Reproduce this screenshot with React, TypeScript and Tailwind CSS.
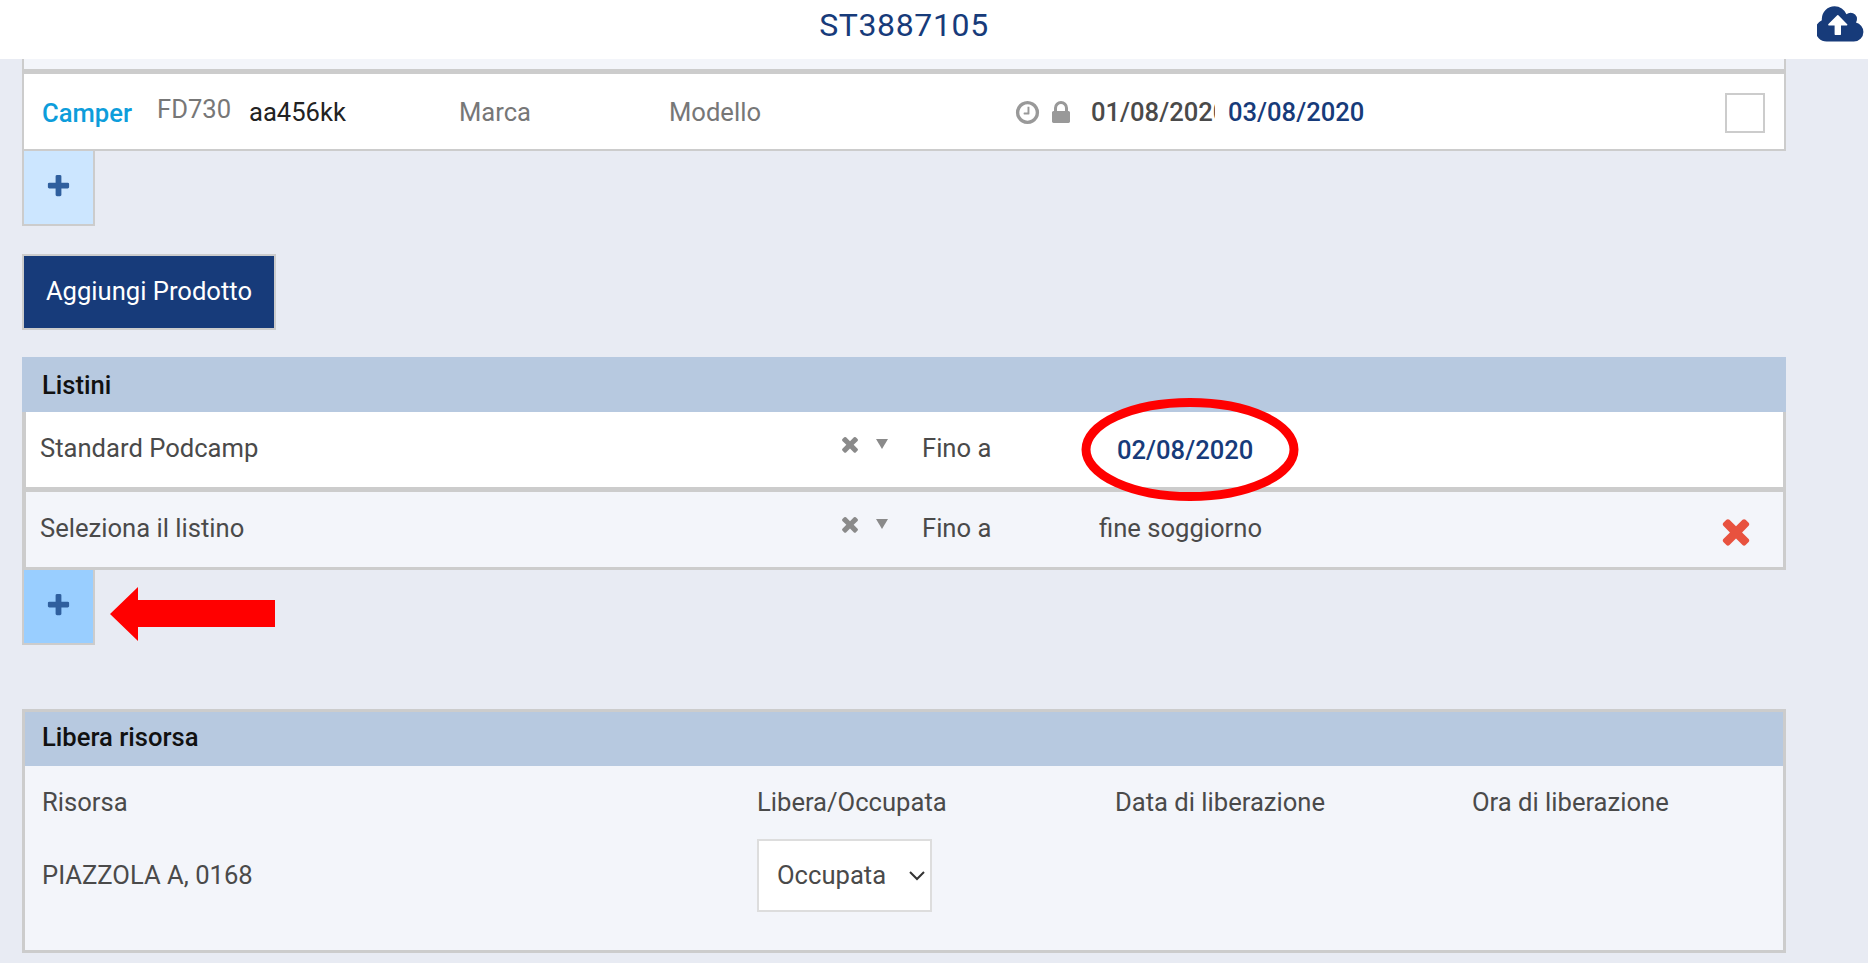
const PATHS = {
  plus: "M1600 736v192q0 40-28 68t-68 28h-416v416q0 40-28 68t-68 28h-192q-40 0-68-28t-28-68v-416h-416q-40 0-68-28t-28-68v-192q0-40 28-68t68-28h416v-416q0-40 28-68t68-28h192q40 0 68 28t28 68v416h416q40 0 68 28t28 68z",
  times: "M1490 1322q0 40-28 68l-136 136q-28 28-68 28t-68-28l-294-294-294 294q-28 28-68 28t-68-28l-136-136q-28-28-28-68t28-68l294-294-294-294q-28-28-28-68t28-68l136-136q28-28 68-28t68 28l294 294 294-294q28-28 68-28t68 28l136 136q28 28 28 68t-28 68l-294 294 294 294q28 28 28 68z",
  lock: "M640 768h512v-192q0-106-75-181t-181-75-181 75-75 181v192zm832 96v576q0 40-28 68t-68 28h-960q-40 0-68-28t-28-68v-576q0-40 28-68t68-28h32v-192q0-184 132-316t316-132 316 132 132 316v192h32q40 0 68 28t28 68z",
  clock: "M1024 544v448q0 14-9 23t-23 9h-320q-14 0-23-9t-9-23v-64q0-14 9-23t23-9h224v-352q0-14 9-23t23-9h64q14 0 23 9t9 23zm416 352q0-148-73-273t-198-198-273-73-273 73-198 198-73 273 73 273 198 198 273 73 273-73 198-198 73-273zm224 0q0 209-103 385.5t-279.5 279.5-385.5 103-385.5-103-279.5-279.5-103-385.5 103-385.5 279.5-279.5 385.5-103 385.5 103 279.5 279.5 103 385.5z",
};

function Glyph({ d, className }: { d: string; className: string }) {
  return (
    <svg viewBox="0 0 1792 1792" className={`shrink-0 fill-current ${className}`}>
      <path d={d} />
    </svg>
  );
}

function CloudUpload() {
  return (
    <svg viewBox="0 0 1920 1792" className="h-[45px] w-[48px] shrink-0 fill-[#173b7a]">
      <path d="M1216 864q0-14-9-23l-352-352q-9-9-23-9t-23 9l-351 351q-10 12-10 24 0 14 9 23t23 9h224v352q0 13 9.5 22.5t22.5 9.5h192q13 0 22.5-9.5t9.5-22.5v-352h224q13 0 22.5-9.5t9.5-22.5zm640 288q0 159-112.5 271.5t-271.5 112.5h-1088q-185 0-316.5-131.5t-131.5-316.5q0-130 70-240t188-165q-2-30-2-43 0-212 150-362t362-150q156 0 285.5 87t188.5 231q71-62 166-62 106 0 181 75t75 181q0 76-41 138 130 31 213.5 135.5t83.5 238.5z" />
    </svg>
  );
}

function PlusButton({ bg }: { bg: string }) {
  return (
    <button className={`flex h-[75px] w-[73px] items-center justify-center border-x-2 border-b-2 border-[#cccccc] pb-[2px] ${bg}`}>
      <Glyph d={PATHS.plus} className="h-[27px] w-[27px] text-[#2f5f9e]" />
    </button>
  );
}

function SelectIcons() {
  return (
    <div className="flex w-[87px] items-center pb-[10px] text-[#8a8a8a]">
      <Glyph d={PATHS.times} className="ml-[3px] h-[24px] w-[24px]" />
      <svg viewBox="0 0 12 10" className="ml-[14px] h-[10px] w-[12px] fill-current">
        <polygon points="0,0 12,0 6,10" />
      </svg>
    </div>
  );
}

export default function App() {
  return (
    <div className="flex h-[963px] w-[1868px] flex-col overflow-hidden bg-[#e8ebf3] font-['Roboto',sans-serif] text-[25.6px] text-[#4a4a4a]">
      <header className="flex h-[59px] shrink-0 items-center bg-white pb-[9px]">
        <h1 className="flex-1 text-center text-[32px] font-normal tracking-[0.64px] text-[#173b7a]">ST3887105</h1>
        <div className="flex w-[60px] justify-end pr-[3px]">
          <CloudUpload />
        </div>
      </header>

      <main className="flex w-[1786px] flex-col pl-[22px]">
        <div className="h-[15px] border-x-2 border-b-[5px] border-[#cccccc] bg-[#f3f5fa]" />
        <div className="flex h-[77px] items-center border-x-2 border-b-2 border-[#cccccc] bg-white pl-[18px] pt-[2px]">
          <span className="w-[115px] pt-[2px] font-medium text-[#0d9ddb]">Camper</span>
          <span className="w-[92px] pb-[6px] text-[#777777]">FD730</span>
          <span className="w-[210px] text-[#222222]">aa456kk</span>
          <span className="w-[210px] text-[#777777]">Marca</span>
          <span className="w-[345px] text-[#777777]">Modello</span>
          <Glyph d={PATHS.clock} className="h-[27px] w-[27px] text-[#999999]" />
          <Glyph d={PATHS.lock} className="ml-[6px] h-[28px] w-[28px] text-[#999999]" />
          <span className="ml-[16px] w-[124px] overflow-hidden font-medium whitespace-nowrap">01/08/2020</span>
          <span className="ml-[13px] font-medium text-[#173b7a]">03/08/2020</span>
          <span className="ml-auto mr-[19px] h-[40px] w-[40px] border-2 border-[#cccccc] bg-white" />
        </div>
        <PlusButton bg="bg-[#cce6ff]" />

        <button className="mt-[28px] h-[76px] w-[254px] border-2 border-[#cccccc] bg-[#173b7a] pb-[2px] text-white">Aggiungi Prodotto</button>

        <section className="mt-[27px] flex flex-col">
          <div className="flex h-[55px] items-center bg-[#b7c9e0] pl-[20px] pt-[2px] font-medium text-[#111111]">Listini</div>
          <div className="flex h-[80px] items-center border-y-0 border-r-[3px] border-b-[5px] border-l-4 border-[#cccccc] bg-white pb-[2px] pl-[14px]">
            <span className="w-[795px]">Standard Podcamp</span>
            <SelectIcons />
            <span className="w-[195px]">Fino a</span>
            <span className="pt-[3px] font-medium text-[#173b7a]">02/08/2020</span>
          </div>
          <div className="flex h-[78px] items-center border-r-[3px] border-b-[3px] border-l-4 border-[#cccccc] bg-[#f3f5fa] pb-[2px] pl-[14px]">
            <span className="w-[795px]">Seleziona il listino</span>
            <SelectIcons />
            <span className="w-[177px]">Fino a</span>
            <span>fine soggiorno</span>
            <Glyph d={PATHS.times} className="ml-auto mr-[27px] mt-[5px] h-[40px] w-[40px] text-[#e8523f]" />
          </div>
        </section>
        <PlusButton bg="bg-[#99ceff]" />

        <section className="mt-[64px] flex h-[244px] flex-col border-[3px] border-[#cccccc] bg-[#f3f5fa]">
          <div className="flex h-[54px] shrink-0 items-center bg-[#b7c9e0] pb-[4px] pl-[17px] font-medium text-[#111111]">Libera risorsa</div>
          <div className="grid grid-cols-[715px_358px_357px_1fr] items-center pl-[17px]">
            <span className="flex h-[73px] items-center">Risorsa</span>
            <span>Libera/Occupata</span>
            <span>Data di liberazione</span>
            <span>Ora di liberazione</span>
            <span>PIAZZOLA A, 0168</span>
            <div className="relative h-[73px] w-[175px]">
              <select className="h-full w-full appearance-none rounded-none border-2 border-[#dddddd] bg-white pl-[18px]">
                <option>Occupata</option>
              </select>
              <svg viewBox="0 0 16 10" className="pointer-events-none absolute right-[7px] top-[32px] h-[10px] w-[16px] fill-none stroke-[#333333] stroke-2">
                <polyline points="1,1 8,8 15,1" />
              </svg>
            </div>
          </div>
        </section>
      </main>

      {/* Annotations drawn over the page */}
      <svg viewBox="0 0 218 103" className="absolute left-[1081px] top-[398px] h-[103px] w-[218px]">
        <ellipse cx="109" cy="51.5" rx="104" ry="47" fill="none" stroke="#ff0000" strokeWidth="9" />
      </svg>
      <svg viewBox="0 0 165 54" className="absolute left-[110px] top-[587px] h-[54px] w-[165px]">
        <polygon points="0,27 28,0 28,13 165,13 165,40 28,40 28,54" fill="#ff0000" />
      </svg>
    </div>
  );
}
